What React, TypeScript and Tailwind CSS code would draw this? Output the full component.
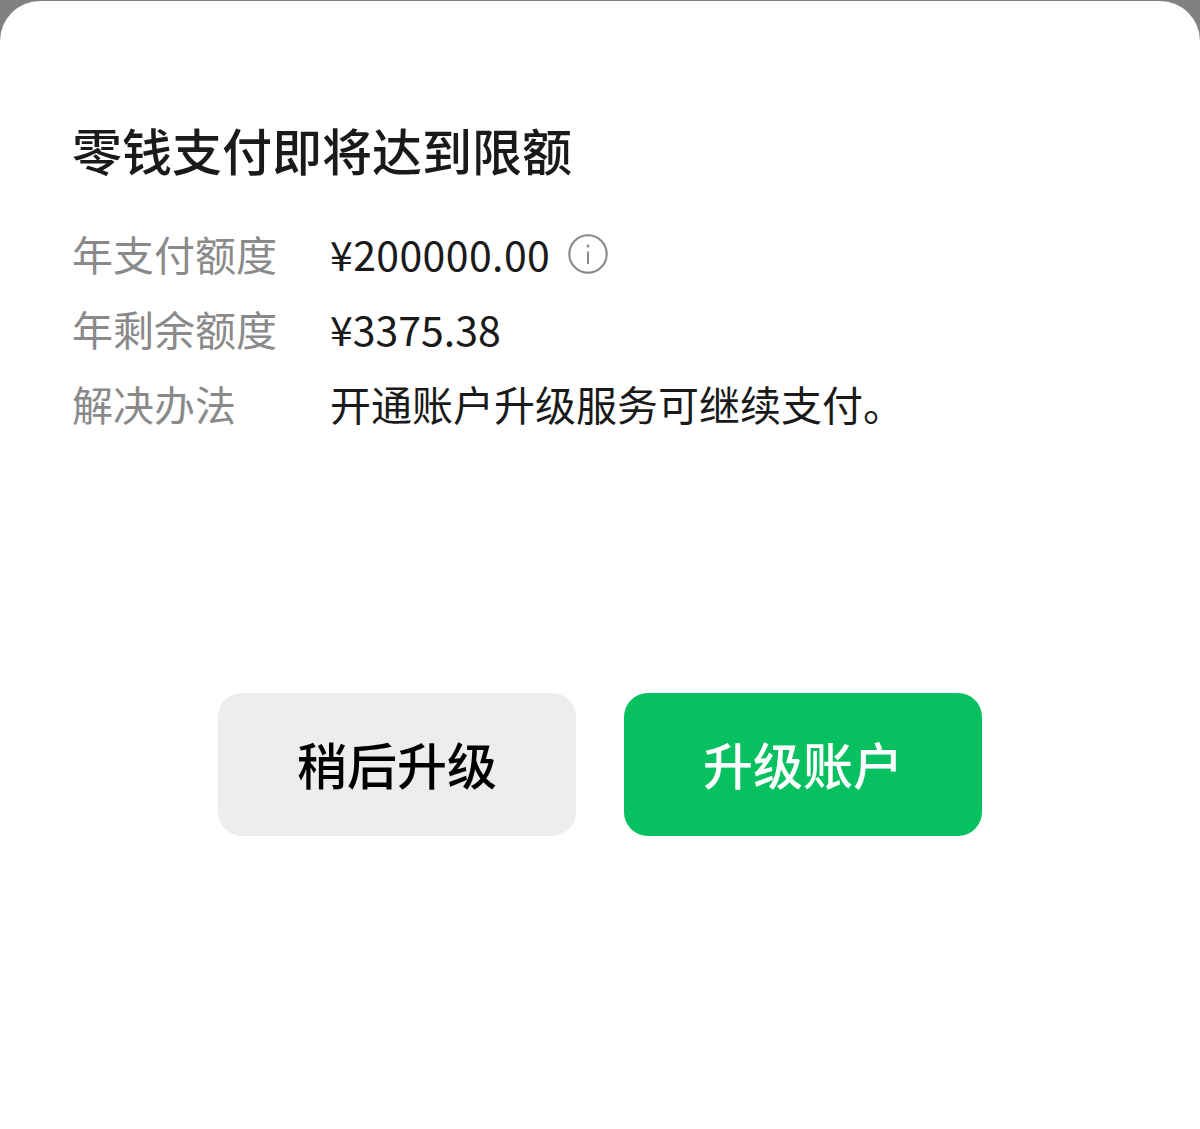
const font = { fontFamily: '"Noto Sans CJK SC", sans-serif' };

function Row({ label, children }: { label: string; children: React.ReactNode }) {
  return (
    <div className="flex h-[75px] items-center text-[41px] leading-none">
      <div className="w-[258px] text-[#8a8a8a]">{label}</div>
      <div className="flex items-center text-[#1a1a1a]">{children}</div>
    </div>
  );
}

function InfoIcon() {
  return (
    <svg width="40" height="40" viewBox="0 0 40 40" fill="none" className="ml-[18px]">
      <circle cx="20" cy="20" r="18.7" stroke="#8a8a8a" strokeWidth="2.1" />
      <circle cx="20" cy="12" r="1.5" fill="#8a8a8a" />
      <path d="M20 17.5v12.5" stroke="#8a8a8a" strokeWidth="2" />
    </svg>
  );
}

export default function App() {
  return (
    <div className="min-h-[1129px] bg-[#808080] pt-px" style={font}>
      <div className="h-[1128px] rounded-t-[40px] bg-white pt-[120px]">
        <div className="px-[72px]">
          <h1 className="text-[50px] leading-[56px] font-medium text-[#1a1a1a]">零钱支付即将达到限额</h1>
          <div className="mt-[39px]">
            <Row label="年支付额度">
              <span className="tracking-[0.4px]">¥200000.00</span>
              <InfoIcon />
            </Row>
            <Row label="年剩余额度">¥3375.38</Row>
            <Row label="解决办法">开通账户升级服务可继续支付。</Row>
          </div>
        </div>
        <div className="mt-[252px] flex justify-center gap-[48px]">
          <button className="h-[143px] w-[358px] rounded-[24px] bg-[#ededed] pb-[3px] text-[50px] font-medium text-black">稍后升级</button>
          <button className="h-[143px] w-[358px] rounded-[24px] bg-[#07c160] pb-[3px] text-[50px] font-medium text-white">升级账户</button>
        </div>
      </div>
    </div>
  );
}
